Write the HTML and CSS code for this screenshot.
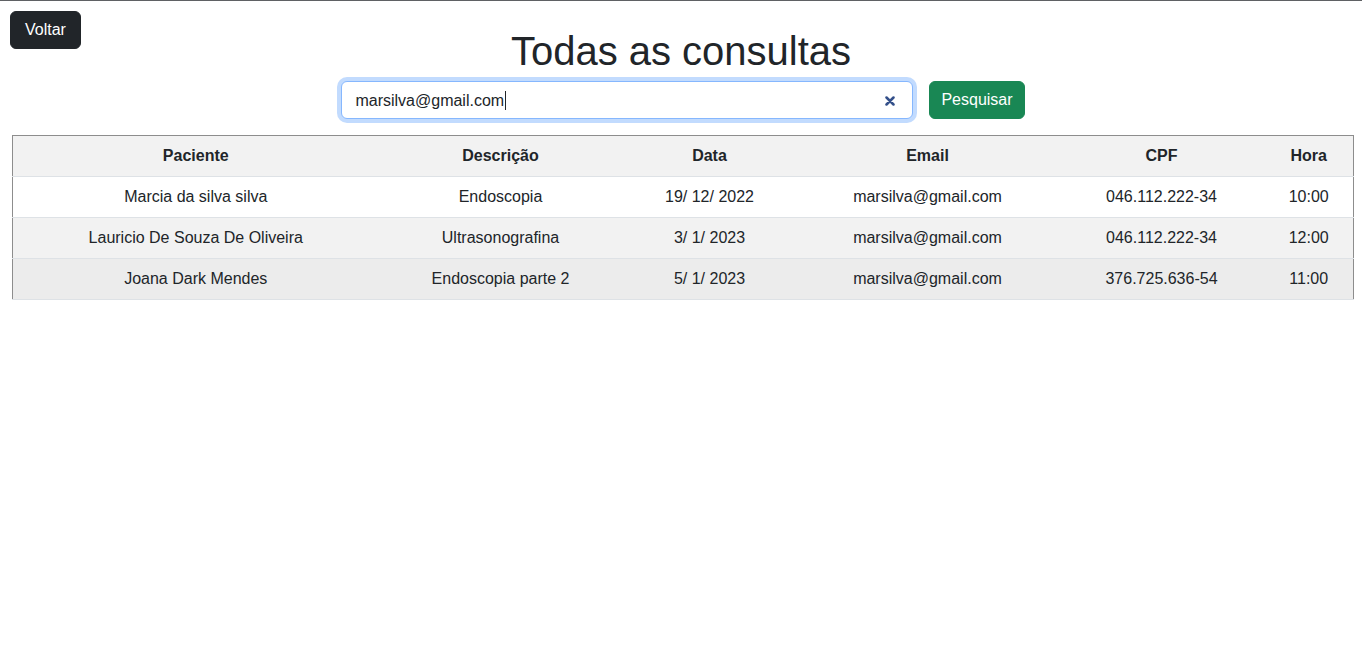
FILE: index.html
```html
<!DOCTYPE html>
<html lang="pt-BR">
<head>
<meta charset="utf-8">
<title>Todas as consultas</title>
<link rel="stylesheet" href="styles.css">
</head>
<body>
<header class="top">
  <div class="top-left"><button class="btn btn-dark" type="button">Voltar</button></div>
  <h1 class="title">Todas as consultas</h1>
  <div class="top-right"></div>
</header>
<form class="search">
  <div class="search-field">
    <span class="search-value">marsilva@gmail.com</span><span class="caret"></span>
    <svg class="clear" width="10" height="10" viewBox="0 0 10 10" aria-hidden="true"><path d="M1.5 1.5 L8.5 8.5 M8.5 1.5 L1.5 8.5" stroke="#34508a" stroke-width="2.5" stroke-linecap="round"/></svg>
  </div>
  <button class="btn btn-success" type="button">Pesquisar</button>
</form>
<table class="grid">
  <colgroup>
    <col class="c-pac"><col class="c-desc"><col class="c-data"><col class="c-email"><col class="c-cpf"><col class="c-hora">
  </colgroup>
  <thead>
    <tr class="row-head"><th>Paciente</th><th>Descrição</th><th>Data</th><th>Email</th><th>CPF</th><th>Hora</th></tr>
  </thead>
  <tbody>
    <tr class="row-a"><td>Marcia da silva silva</td><td>Endoscopia</td><td>19/ 12/ 2022</td><td>marsilva@gmail.com</td><td>046.112.222-34</td><td>10:00</td></tr>
    <tr class="row-b"><td>Lauricio De Souza De Oliveira</td><td>Ultrasonografina</td><td>3/ 1/ 2023</td><td>marsilva@gmail.com</td><td>046.112.222-34</td><td>12:00</td></tr>
    <tr class="row-c"><td>Joana Dark Mendes</td><td>Endoscopia parte 2</td><td>5/ 1/ 2023</td><td>marsilva@gmail.com</td><td>376.725.636-54</td><td>11:00</td></tr>
  </tbody>
</table>
</body>
</html>
```
FILE: styles.css
```css
* { box-sizing: border-box; }
html, body { margin: 0; padding: 0; background: #fff; }
body {
  border-top: 1px solid #5f6164;
  font-family: "Liberation Sans", Arial, sans-serif;
  font-size: 16px;
  line-height: 1.5;
  color: #212529;
}
.top {
  display: grid;
  grid-template-columns: 1fr auto 1fr;
  align-items: start;
  padding-top: 10px;
}
.top-left { padding-left: 10px; }
.btn {
  font-family: inherit;
  font-size: 16px;
  line-height: 24px;
  padding: 6px 14px;
  border: 1px solid transparent;
  border-radius: 6px;
  color: #fff;
  cursor: pointer;
}
.btn-dark { background: #212529; border-color: #212529; }
.btn-success { background: #198754; border-color: #198754; padding: 6px 11px; }
.title {
  margin: 16px 0 0;
  font-size: 40px;
  line-height: 48px;
  font-weight: 500;
  color: #212529;
}
.search {
  display: flex;
  justify-content: center;
  gap: 16px;
  margin: 6px 0 0 4px;
}
.search-field {
  width: 572px;
  height: 38px;
  display: flex;
  align-items: center;
  padding: 1px 17px 0 13px;
  border: 1px solid #86b7fe;
  border-radius: 6px;
  box-shadow: 0 0 0 4px rgba(13, 110, 253, 0.25);
  background: #fff;
}
.search-value { white-space: nowrap; }
.caret { width: 1px; height: 19px; background: #212529; margin-left: 1px; }
.clear { margin-left: auto; display: block; }
.grid {
  margin: 16px 0 0 12px;
  width: 1341px;
  table-layout: fixed;
  border-collapse: collapse;
  border-top: 1px solid #8d8d8d;
  border-left: 1px solid #8d8d8d;
  border-right: 1px solid #8d8d8d;
}
.c-pac { width: 366px; }
.c-desc { width: 244px; }
.c-data { width: 174px; }
.c-email { width: 262px; }
.c-cpf { width: 206px; }
.c-hora { width: 89px; }
.grid th, .grid td {
  padding: 8px;
  text-align: center;
  border-bottom: 1px solid #dee2e6;
  line-height: 24px;
}
.grid th { font-weight: 700; }
.row-head { background: #f2f2f2; }
.row-a { background: #fff; }
.row-b { background: #f2f2f2; }
.row-c { background: #ececec; }
```
